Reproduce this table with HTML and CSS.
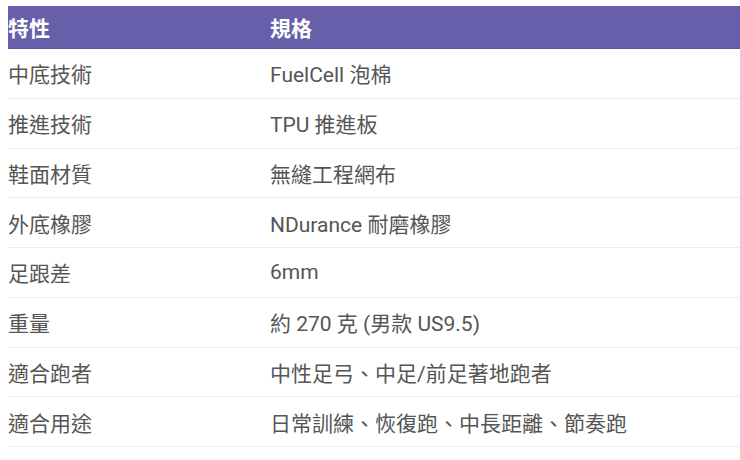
FILE: index.html
```html
<!DOCTYPE html>
<html lang="zh-Hant">
<head>
<meta charset="utf-8">
<link rel="stylesheet" href="styles.css">
</head>
<body>
<table class="spec">
  <thead>
    <tr><th class="c1">特性</th><th>規格</th></tr>
  </thead>
  <tbody>
    <tr><td class="c1">中底技術</td><td>FuelCell 泡棉</td></tr>
    <tr><td class="c1">推進技術</td><td>TPU 推進板</td></tr>
    <tr><td class="c1">鞋面材質</td><td>無縫工程網布</td></tr>
    <tr><td class="c1">外底橡膠</td><td>NDurance 耐磨橡膠</td></tr>
    <tr><td class="c1">足跟差</td><td>6mm</td></tr>
    <tr><td class="c1">重量</td><td>約 270 克 (男款 US9.5)</td></tr>
    <tr><td class="c1">適合跑者</td><td>中性足弓、中足/前足著地跑者</td></tr>
    <tr><td class="c1">適合用途</td><td>日常訓練、恢復跑、中長距離、節奏跑</td></tr>
  </tbody>
</table>
</body>
</html>
```
FILE: styles.css
```css
html, body {
  margin: 0;
  padding: 0;
  background: #ffffff;
}
body {
  padding: 6px 0 0 8px;
  font-family: Roboto, "Noto Sans CJK TC", sans-serif;
  font-size: 21px;
  color: #555555;
  overflow: hidden;
}
.spec {
  width: 740px;
  border-collapse: collapse;
}
.spec th {
  background: #685fab;
  color: #ffffff;
  font-weight: 700;
  text-align: left;
  height: 42px;
  padding: 0;
  vertical-align: middle;
  border-bottom: 1px solid #5f56a0;
}
.spec td {
  height: 48.75px;
  padding: 0;
  vertical-align: middle;
  border-bottom: 1px solid #ececec;
}
.spec .c1 {
  width: 262px;
}
```
